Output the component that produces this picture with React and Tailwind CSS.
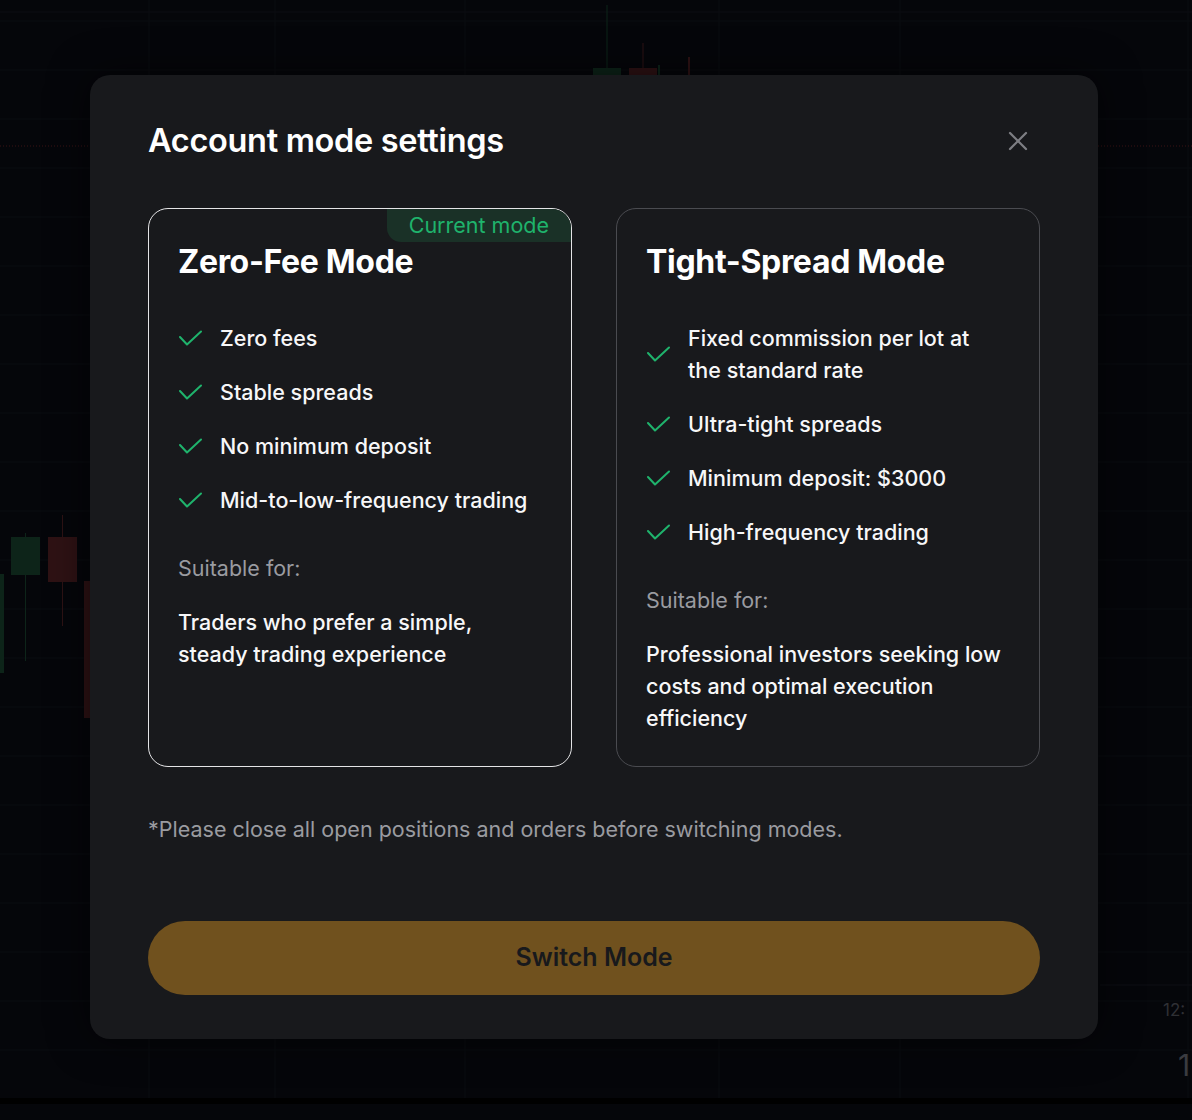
import { X } from 'lucide-react';

const zeroFee = ['Zero fees', 'Stable spreads', 'No minimum deposit', 'Mid-to-low-frequency trading'];
const tightSpread = [
  'Fixed commission per lot at the standard rate',
  'Ultra-tight spreads',
  'Minimum deposit: $3000',
  'High-frequency trading',
];

const hLines = Array.from({ length: 23 }, (_, i) => 21 + i * 49);
const vLines = [149, 275, 465, 719, 900, 1188];

// candles: x, width, body top/bottom, wick top/bottom, up?
const candles = [
  { x: 593, w: 28, bt: 68, bb: 80, wt: 5, wb: 80, up: true },
  { x: 629, w: 28, bt: 68, bb: 80, wt: 43, wb: 80, up: false },
  { x: 658, w: 2, bt: 65, bb: 80, wt: 65, wb: 80, up: true },
  { x: 688, w: 2, bt: 57, bb: 80, wt: 57, wb: 80, up: false },
  { x: 11, w: 29, bt: 537, bb: 575, wt: 533, wb: 661, up: true },
  { x: 48, w: 29, bt: 537, bb: 582, wt: 515, wb: 626, up: false },
  { x: -4, w: 8, bt: 574, bb: 673, wt: 574, wb: 673, up: true },
  { x: 84, w: 8, bt: 581, bb: 718, wt: 581, wb: 718, up: false },
];

function ChartBackdrop() {
  return (
    <svg className="absolute inset-0" width="1192" height="1120" viewBox="0 0 1192 1120">
      <rect width="1192" height="1120" fill="#05060a" />
      <line x1="0" y1="12" x2="1192" y2="12" stroke="#0c0d12" />
      {hLines.map((y) => (
        <line key={y} x1="0" y1={y} x2="1192" y2={y} stroke="#0b0c11" />
      ))}
      {vLines.map((x) => (
        <line key={x} x1={x} y1="0" x2={x} y2="1098" stroke="#0b0c11" />
      ))}
      <line x1="0" y1="146" x2="1192" y2="146" stroke="#3a1214" strokeDasharray="1 2" />
      {candles.map((c, i) => (
        <g key={i} fill={c.up ? '#0d2419' : '#2e1214'} stroke="none">
          <rect x={c.x + c.w / 2 - 0.5} y={c.wt} width="1" height={c.wb - c.wt} />
          <rect x={c.x} y={c.bt} width={c.w} height={c.bb - c.bt} />
        </g>
      ))}
      <line x1="1100" y1="985" x2="1192" y2="985" stroke="#0e0f14" />
      <text x="1163" y="1016" fill="#2f3035" fontSize="17" fontFamily="Inter, sans-serif">12:</text>
      <text x="1178" y="1076" fill="#3a3b40" fontSize="30" fontFamily="Inter, sans-serif">1</text>
      <rect x="0" y="1098" width="1192" height="6" fill="#000000" />
    </svg>
  );
}

function CheckMark() {
  return (
    <svg width="24" height="17" viewBox="0 0 24 17" className="shrink-0" fill="none">
      <path d="M2 7 L9 14.5 L23 1.5" stroke="#1fb36c" strokeWidth="2" strokeLinecap="round" strokeLinejoin="round" />
    </svg>
  );
}

function ModeCard({ title, items, suitable, current }) {
  return (
    <div
      className={`relative overflow-hidden rounded-[20px] border px-[29px] pt-[33px] pb-[32px] ${
        current ? 'border-[#e4e4e6]' : 'border-[#4a4b50]'
      }`}
    >
      {current && (
        <div className="absolute top-0 right-0 h-[33px] rounded-bl-[14px] bg-[#1a3127] pl-[22px] pr-[22px] text-[21.5px] leading-[33px] text-[#1fb36c]">
          Current mode
        </div>
      )}
      <h3 className="text-[32px] font-bold leading-[40px] tracking-[-0.01em] text-white">{title}</h3>
      <ul className="mt-[40px] flex flex-col gap-[22px]">
        {items.map((item) => (
          <li key={item} className="flex items-center gap-[18px]">
            <CheckMark />
            <span className="max-w-[315px] text-[21.5px] font-medium leading-[32px] text-[#f7f7f8]">{item}</span>
          </li>
        ))}
      </ul>
      <p className="mt-[36px] text-[21.5px] leading-[32px] text-[#9a9ba0]">Suitable for:</p>
      <p className="mt-[22px] max-w-[359px] text-[21.5px] font-medium leading-[32px] text-[#f7f7f8]">{suitable}</p>
    </div>
  );
}

export default function App() {
  return (
    <div className="relative h-[1120px] w-[1192px] overflow-hidden bg-[#05060a]" style={{ fontFamily: 'Inter, "Noto Sans", sans-serif' }}>
      <ChartBackdrop />

      <div className="absolute inset-0 flex justify-center pt-[75px] pr-[4px]">
        <div className="h-[964px] w-[1008px] rounded-[20px] bg-[#18191c] px-[58px] pt-[46px] shadow-[0_0_40px_rgba(0,0,0,0.6)]">
          <div className="flex items-center justify-between">
            <h2 className="text-[32.5px] font-semibold leading-[40px] tracking-[-0.01em] text-white">Account mode settings</h2>
            <button className="mr-[6px] text-[#7d7e83]">
              <X size={32} strokeWidth={1.7} />
            </button>
          </div>

          <div className="mt-[47px] grid grid-cols-2 gap-[44px]">
            <ModeCard
              title="Zero-Fee Mode"
              items={zeroFee}
              suitable="Traders who prefer a simple, steady trading experience"
              current
            />
            <ModeCard
              title="Tight-Spread Mode"
              items={tightSpread}
              suitable="Professional investors seeking low costs and optimal execution efficiency"
            />
          </div>

          <p className="mt-[46px] text-[21.5px] leading-[32px] text-[#9a9ba0]">
            *Please close all open positions and orders before switching modes.
          </p>

          <button className="mt-[76px] flex h-[74px] w-full items-center justify-center rounded-full bg-[#70511e] text-[25px] font-semibold text-[#18191c]">
            Switch Mode
          </button>
        </div>
      </div>
    </div>
  );
}
